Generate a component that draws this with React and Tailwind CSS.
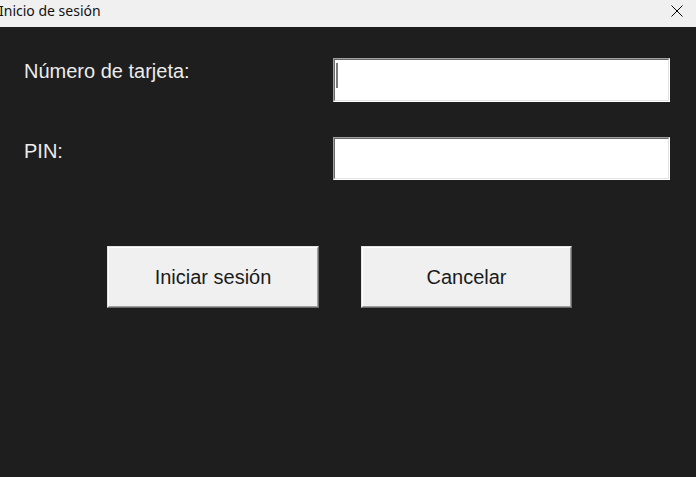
import React from 'react';

function Field({ label, height, labelOffset, caret }) {
  return (
    <div className="flex items-start">
      <div
        className="w-[333px] pl-[24px] text-[20px] leading-[23px] text-[#ececec]"
        style={{ paddingTop: labelOffset }}
      >
        {label}
      </div>
      {/* Sunken edit box */}
      <div
        className="w-[337px] border border-t-[#a0a0a0] border-l-[#a0a0a0] border-b-[#ffffff] border-r-[#ffffff]"
        style={{ height }}
      >
        <div className="h-full border border-t-[#696969] border-l-[#696969] border-b-[#e3e3e3] border-r-[#e3e3e3] bg-white relative">
          {caret && <span className="absolute left-[1px] top-[3px] w-[2px] h-[25px] bg-[#7a7a7a]"></span>}
        </div>
      </div>
    </div>
  );
}

function Button({ children, width }) {
  return (
    <button
      className="h-[62px] border border-t-[#e3e3e3] border-l-[#e3e3e3] border-b-[#696969] border-r-[#696969] p-0 bg-[#f0f0f0]"
      style={{ width }}
    >
      <div className="h-full w-full flex items-center justify-center border border-t-white border-l-white border-b-[#a0a0a0] border-r-[#a0a0a0] text-[20px] text-[#1b1b1b]">
        {children}
      </div>
    </button>
  );
}

export default function App() {
  return (
    <div className="w-[696px] h-[477px] bg-[#1e1e1e] flex flex-col overflow-hidden font-['Liberation_Sans',Arial,sans-serif]">
      {/* Title bar */}
      <div className="h-[27px] bg-[#f0f0f0] flex items-start justify-between shrink-0">
        <span className="ml-[-1px] mt-[1px] text-[14px] leading-[20px] text-[#111] font-['Noto_Sans','Open_Sans',sans-serif]">
          Inicio de sesión
        </span>
        <svg className="mr-[13px] mt-[5px]" width="12" height="12" viewBox="0 0 12 12">
          <path d="M0.5 0.5 L11.5 11.5 M11.5 0.5 L0.5 11.5" stroke="#000" strokeWidth="1" fill="none" />
        </svg>
      </div>

      <div className="pt-[31px] flex flex-col">
        <Field label="Número de tarjeta:" height={44} labelOffset={2} caret />
        <div className="h-[35px]"></div>
        <Field label="PIN:" height={43} labelOffset={3} />
      </div>

      <div className="mt-[66px] pl-[107px] flex gap-[42px]">
        <Button width={212}>Iniciar sesión</Button>
        <Button width={211}>Cancelar</Button>
      </div>
    </div>
  );
}
